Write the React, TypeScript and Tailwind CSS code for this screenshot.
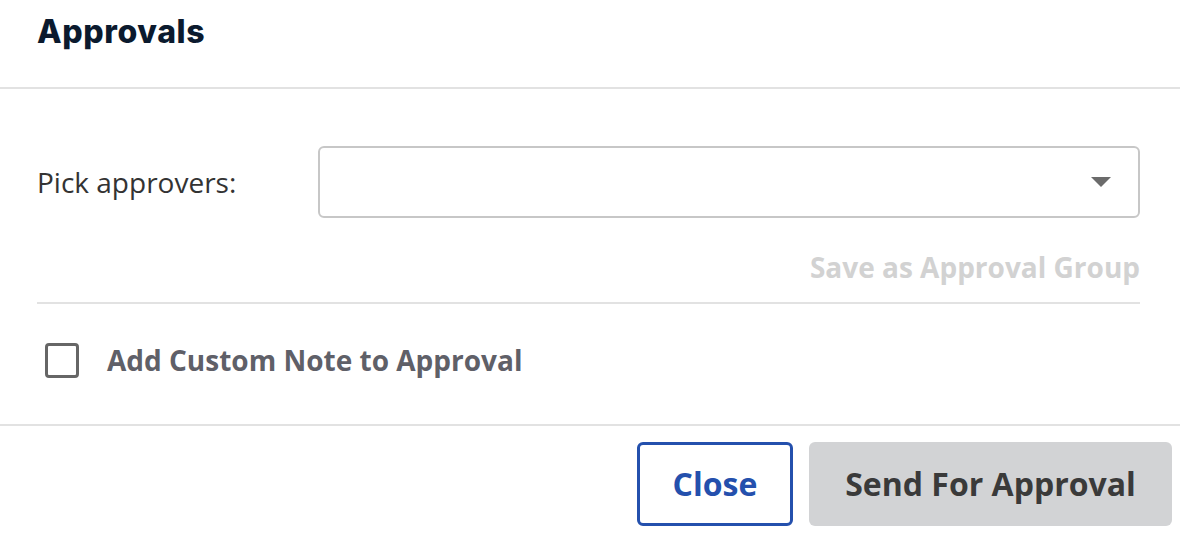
export default function App() {
  return (
    <div className="h-[536px] w-[1180px] bg-white font-['Open_Sans',sans-serif] overflow-hidden">
      <div className="flex h-[87px] items-start px-[37px] pt-[12px]">
        <h1 className="font-['Inter',sans-serif] text-[32px] font-extrabold leading-[40px] text-[#0b1a2e] tracking-[0.6px]">
          Approvals
        </h1>
      </div>
      <div className="h-[2px] bg-[#e2e2e2]" />
      <div className="px-[37px] pr-[40px]">
        <div className="flex items-center pt-[57px]">
          <label className="w-[281px] text-[28px] leading-[36px] text-[#333333]">Pick approvers:</label>
          <div className="flex h-[72px] flex-1 items-center justify-end rounded-[6px] border-2 border-[#c7c7c7] pr-[27px]">
            <svg width="20" height="10" viewBox="0 0 20 10">
              <path d="M0 0 H20 L10 10 Z" fill="#6b6b6b" />
            </svg>
          </div>
        </div>
        <div className="flex justify-end pt-[31px]">
          <span className="text-[28px] font-bold leading-[36px] text-[#d2d2d2]">Save as Approval Group</span>
        </div>
        <div className="mt-[17px] h-[2px] bg-[#e2e2e2]" />
        <div className="flex h-[36px] items-center mt-[38px] mb-[46px]">
          <div className="ml-[8px] h-[35px] w-[34px] rounded-[4px] border-[3px] border-[#666666]" />
          <span className="ml-[28px] text-[28px] font-bold leading-[36px] text-[#5f6068]">Add Custom Note to Approval</span>
        </div>
      </div>
      <div className="h-[2px] bg-[#e2e2e2]" />
      <div className="flex justify-end gap-[16px] pr-[8px] pt-[16px]">
        <button className="h-[84px] w-[156px] rounded-[6px] border-[3px] border-[#2450ad] text-[32px] font-bold text-[#2450ad]">
          Close
        </button>
        <button className="h-[84px] w-[363px] rounded-[6px] bg-[#d2d3d5] text-[32px] font-bold text-[#3a3a3a]">
          Send For Approval
        </button>
      </div>
    </div>
  );
}
